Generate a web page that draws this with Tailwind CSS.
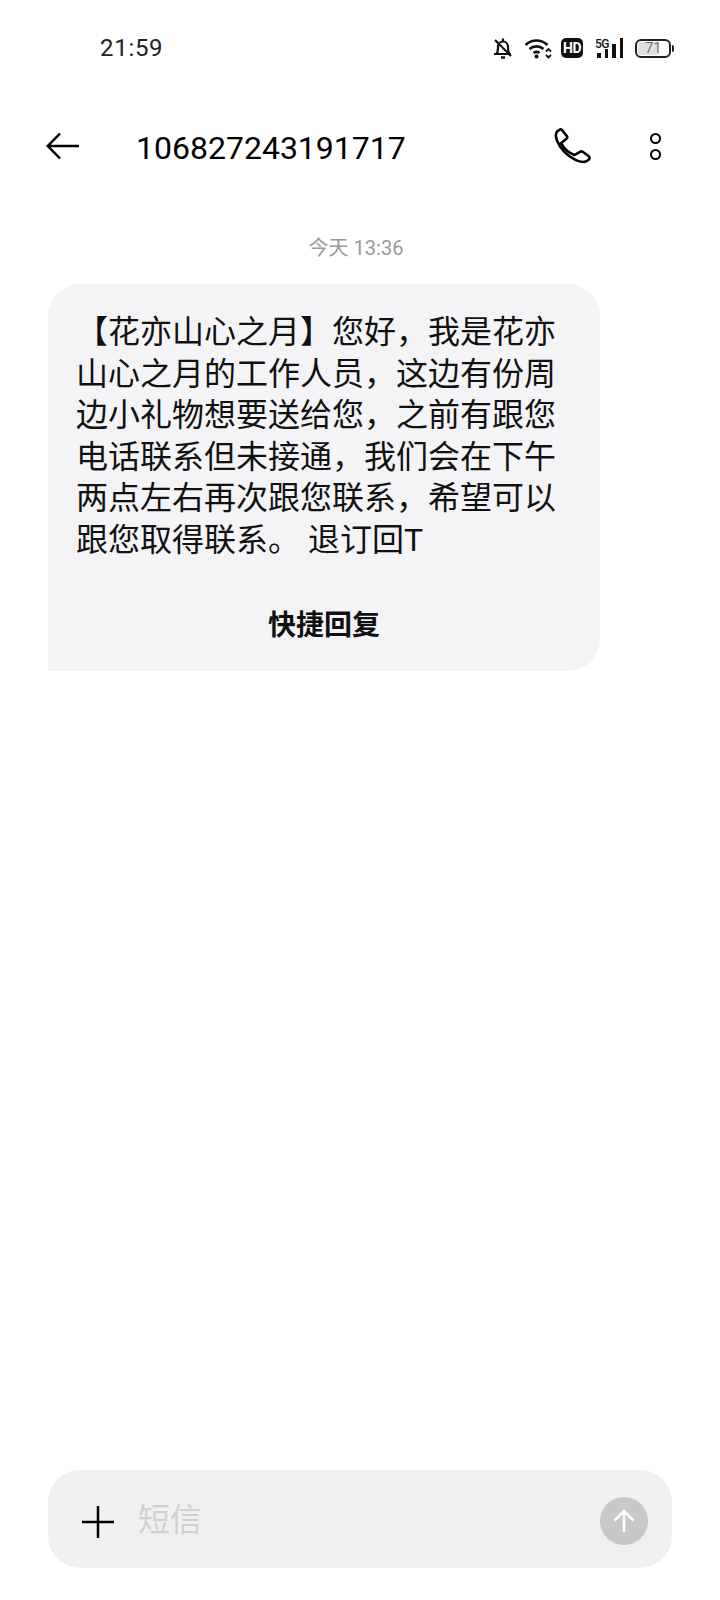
<!DOCTYPE html>
<html lang="zh-CN">
<head>
    <meta charset="UTF-8">
    <title>短信</title>
    <script src="https://cdn.jsdelivr.net/npm/@tailwindcss/browser@4"></script>
</head>
<body class="bg-white text-black font-['Roboto','Noto_Sans_CJK_SC',sans-serif]">
    <div class="w-[720px] h-[1600px] flex flex-col overflow-hidden">
        <!-- status bar -->
        <div class="h-[96px] flex items-center pl-[100px] pr-[46px] text-[#222]">
            <span class="text-[24px] leading-none tracking-[0.7px]">21:59</span>
            <div class="ml-auto flex items-center">
                <svg width="22" height="24" viewBox="0 0 22 24" fill="none" stroke="#111" stroke-width="2.200">
                    <path d="M2 18h17M4.500 18c1.500-2 1.500-4 1.500-7 0-3 2-5.500 5-5.500s5 2.500 5 5.500c0 3 0 5 1.500 7"/>
                    <path d="M11 2.500v3M3 4l16 16"/>
                    <path d="M9 21.500h4" stroke-width="2.500"/>
                </svg>
                <svg class="ml-[10px]" width="28" height="24" viewBox="0 0 28 24" fill="none" stroke="#111" stroke-width="2.600">
                    <path d="M1.500 9c6.500-6 15.500-6 22 0"/>
                    <path d="M5.500 13c4-3.500 10-3.500 14 0"/>
                    <path d="M9.500 17c2-1.500 4-1.500 6 0"/>
                    <circle cx="12.500" cy="20.500" r="2" fill="#111" stroke="none"/>
                    <path d="M22 15.500l2.500-2.500 2.500 2.500M22 19l2.500 2.500 2.500-2.500" stroke-width="1.800"/>
                </svg>
                <div class="ml-[9px] w-[22px] h-[20px] rounded-[5px] bg-[#111] text-white text-[14px] font-bold leading-[20px] text-center tracking-[-0.5px]">HD</div>
                <div class="ml-[10px] relative w-[30px] h-[20px]">
                    <span class="absolute left-[2px] top-0 text-[12px] font-medium leading-none text-[#111] tracking-[-0.5px]">5G</span>
                    <div class="absolute right-0 bottom-0 flex items-end gap-[4px]">
                        <div class="w-[3.500px] h-[5px] bg-[#111]"></div>
                        <div class="w-[3.500px] h-[9px] bg-[#111]"></div>
                        <div class="w-[3.500px] h-[14px] bg-[#111]"></div>
                        <div class="w-[3.500px] h-[20px] bg-[#111]"></div>
                    </div>
                </div>
                <div class="flex items-center ml-[12px]">
                    <div class="w-[36px] h-[19px] rounded-[6px] border-2 border-[#222] p-[1px]">
                        <div class="h-full w-[71%] rounded-[3px] bg-[#e0e0e0] flex items-center">
                            <span class="pl-[7px] text-[15px] font-light leading-none text-[#444]">71</span>
                        </div>
                    </div>
                    <div class="w-[2px] h-[7px] ml-[1px] bg-[#222] rounded-r-sm"></div>
                </div>
            </div>
        </div>

        <!-- header -->
        <div class="h-[100px] flex items-center pl-[46px] pr-[59px]">
            <svg width="34" height="30" viewBox="0 0 34 30" fill="none" stroke="#000" stroke-width="2.500">
                <path d="M33 15H2M14 2.500L1.800 15 14 27.500"/>
            </svg>
            <span class="ml-[56px] mt-[3px] text-[32px] leading-none">106827243191717</span>
            <svg class="ml-auto" width="37" height="36" viewBox="0 0 37 36" fill="none" stroke="#000" stroke-width="2.600" stroke-linejoin="round">
                <path d="M3.500 3L5.500 1.800C6.500 1.200 7.500 1.500 8.200 2.300L12.800 8C13.500 9 13.300 10 12.500 10.700L7.200 15C9.500 20 14 24.500 20.500 27L26 23.800C27 23.200 28 23.300 29 24L34.500 28C36 29.300 36 30.800 34.500 31.800L32.500 33.200C30 34.500 26 34.200 21 31.700C12 27 6 20 3 12.500C1.500 8.500 1.500 5 3.500 3Z"/>
            </svg>
            <div class="ml-[59px] flex flex-col gap-[5px]">
                <div class="w-[11px] h-[11px] rounded-full border-[2.500px] border-black"></div>
                <div class="w-[11px] h-[11px] rounded-full border-[2.500px] border-black"></div>
            </div>
        </div>

        <!-- messages -->
        <div class="flex-1 pl-[48px] pt-[40px]">
            <div class="w-[616px] text-center text-[20px] leading-[24px] text-[#999]">今天 13:36</div>
            <div class="mt-[24px] w-[552px] h-[387px] bg-[#f4f4f6] rounded-[32px] rounded-bl-none pt-[28px]">
                <p class="pl-[28px] pr-[40px] text-[32px] leading-[41.5px] text-[#111]">【花亦山心之月】您好，我是花亦山心之月的工作人员，这边有份周边小礼物想要送给您，之前有跟您电话联系但未接通，我们会在下午两点左右再次跟您联系，希望可以跟您取得联系。 退订回T</p>
                <div class="mt-[47px] text-center text-[28px] leading-[36px] font-bold text-[#111]">快捷回复</div>
            </div>
        </div>

        <!-- input -->
        <div class="px-[48px] pb-[32px]">
            <div class="h-[98px] bg-[#f0f0f0] rounded-[32px] flex items-center pl-[34px] pr-[24px]">
                <svg class="mt-[5px]" width="32" height="40" viewBox="0 0 32 40" fill="none" stroke="#000" stroke-width="2.500">
                    <path d="M0 20h32M16 4v32"/>
                </svg>
                <span class="ml-[24px] mt-[1px] text-[32px] leading-none text-[#d0d0d0]">短信</span>
                <div class="ml-auto mt-[4px] w-[48px] h-[48px] rounded-full bg-[#c8c8c8] flex items-center justify-center">
                    <svg width="24" height="24" viewBox="0 0 24 24" fill="none" stroke="#fff" stroke-width="2.500">
                        <path d="M12 23V2.500M2.500 11.500L12 2l9.500 9.500"/>
                    </svg>
                </div>
            </div>
        </div>
    </div>
</body>
</html>
